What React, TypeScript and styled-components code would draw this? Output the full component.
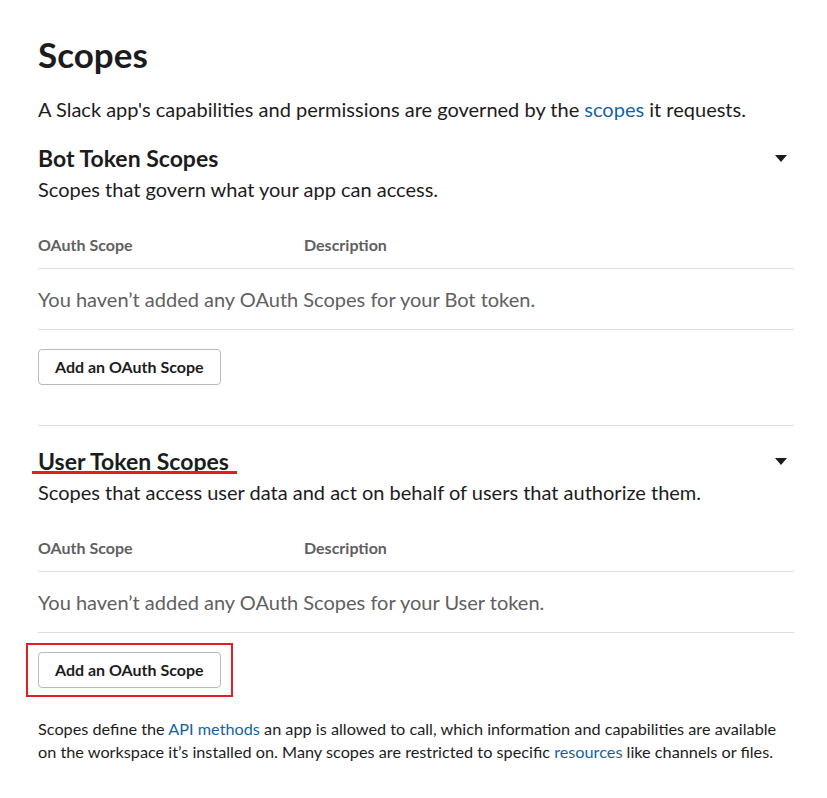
import React from 'react'
import styled, { createGlobalStyle } from 'styled-components'

const GlobalStyle = createGlobalStyle`
	body {
		margin: 0;
		background: #ffffff;
		font-family: Lato, 'Noto Sans', sans-serif;
		color: #1d1c1d;
	}
`

const Page = styled.div`
	padding: 29px 33px 30px 38px;
`

const Title = styled.h1`
	margin: 0;
	font-size: 35px;
	font-weight: 700;
	line-height: 50px;
`

const Lead = styled.p`
	margin: 17px 0 0;
	font-size: 20px;
	line-height: 26px;
`

const Link = styled.a`
	color: #1264a3;
	text-decoration: none;
`

const Section = styled.section<{ $divider?: boolean }>`
	padding-top: ${(p) => (p.$divider ? '19px' : '20px')};
	border-top: ${(p) => (p.$divider ? '1px solid #dddddd' : 'none')};
	margin-top: ${(p) => (p.$divider ? '40px' : '0')};
`

const SectionHead = styled.div`
	display: flex;
	align-items: center;
	justify-content: space-between;
`

const SectionTitle = styled.h2<{ $marked?: boolean }>`
	position: relative;
	margin: 0;
	font-size: 23px;
	font-weight: 700;
	line-height: 32px;

	${(p) =>
		p.$marked &&
		`
		&::after {
			content: '';
			position: absolute;
			left: -6px;
			width: 205px;
			top: 26px;
			height: 3px;
			background: #e01e27;
		}
	`}
`

const Caret = styled.span`
	width: 0;
	height: 0;
	margin-right: 7px;
	border-left: 6px solid transparent;
	border-right: 6px solid transparent;
	border-top: 7px solid #1d1c1d;
`

const SectionSub = styled.p`
	margin: 0;
	font-size: 20px;
	line-height: 30px;
`

const Table = styled.div`
	margin-top: 30px;
`

const HeaderRow = styled.div`
	display: grid;
	grid-template-columns: 266px 1fr;
	padding-bottom: 12px;
	border-bottom: 1px solid #dddddd;
	font-size: 16px;
	font-weight: 700;
	line-height: 22px;
	color: #616061;
`

const EmptyRow = styled.div`
	padding: 17px 0 16px;
	border-bottom: 1px solid #dddddd;
	font-size: 20px;
	line-height: 27px;
	color: #616061;
`

const Actions = styled.div<{ $boxed?: boolean }>`
	display: inline-block;
	margin-top: ${(p) => (p.$boxed ? '10px' : '19px')};
	margin-left: ${(p) => (p.$boxed ? '-12px' : '0')};
	padding: ${(p) => (p.$boxed ? '7px 10px' : '0')};
	border: ${(p) => (p.$boxed ? '2px solid #e01e27' : 'none')};
	line-height: 0;
`

const Button = styled.button`
	height: 36px;
	padding: 0 16px;
	border: 1px solid #bbbabb;
	border-radius: 4px;
	background: #ffffff;
	font-family: Lato, 'Noto Sans', sans-serif;
	font-size: 16px;
	font-weight: 700;
	line-height: 20px;
	color: #1d1c1d;
	cursor: pointer;
`

const Footnote = styled.p`
	margin: 20px 0 0;
	font-size: 16.25px;
	line-height: 23px;
	color: #1d1c1d;
`

type ScopeSectionProps = {
	title: string
	subtitle: string
	token: string
	divider?: boolean
	marked?: boolean
}

const ScopeSection = ({ title, subtitle, token, divider, marked }: ScopeSectionProps) => (
	<Section $divider={divider}>
		<SectionHead>
			<SectionTitle $marked={marked}>{title}</SectionTitle>
			<Caret />
		</SectionHead>
		<SectionSub>{subtitle}</SectionSub>
		<Table>
			<HeaderRow>
				<span>OAuth Scope</span>
				<span>Description</span>
			</HeaderRow>
			<EmptyRow>You haven’t added any OAuth Scopes for your {token} token.</EmptyRow>
		</Table>
		<Actions $boxed={marked}>
			<Button>Add an OAuth Scope</Button>
		</Actions>
	</Section>
)

export default function App() {
	return (
		<Page>
			<GlobalStyle />
			<Title>Scopes</Title>
			<Lead>
				A Slack app's capabilities and permissions are governed by the <Link href="#">scopes</Link> it
				requests.
			</Lead>
			<ScopeSection
				title="Bot Token Scopes"
				subtitle="Scopes that govern what your app can access."
				token="Bot"
			/>
			<ScopeSection
				title="User Token Scopes"
				subtitle="Scopes that access user data and act on behalf of users that authorize them."
				token="User"
				divider
				marked
			/>
			<Footnote>
				Scopes define the <Link href="#">API methods</Link> an app is allowed to call, which information and
				capabilities are available on the workspace it’s installed on. Many scopes are restricted to specific{' '}
				<Link href="#">resources</Link> like channels or files.
			</Footnote>
		</Page>
	)
}
